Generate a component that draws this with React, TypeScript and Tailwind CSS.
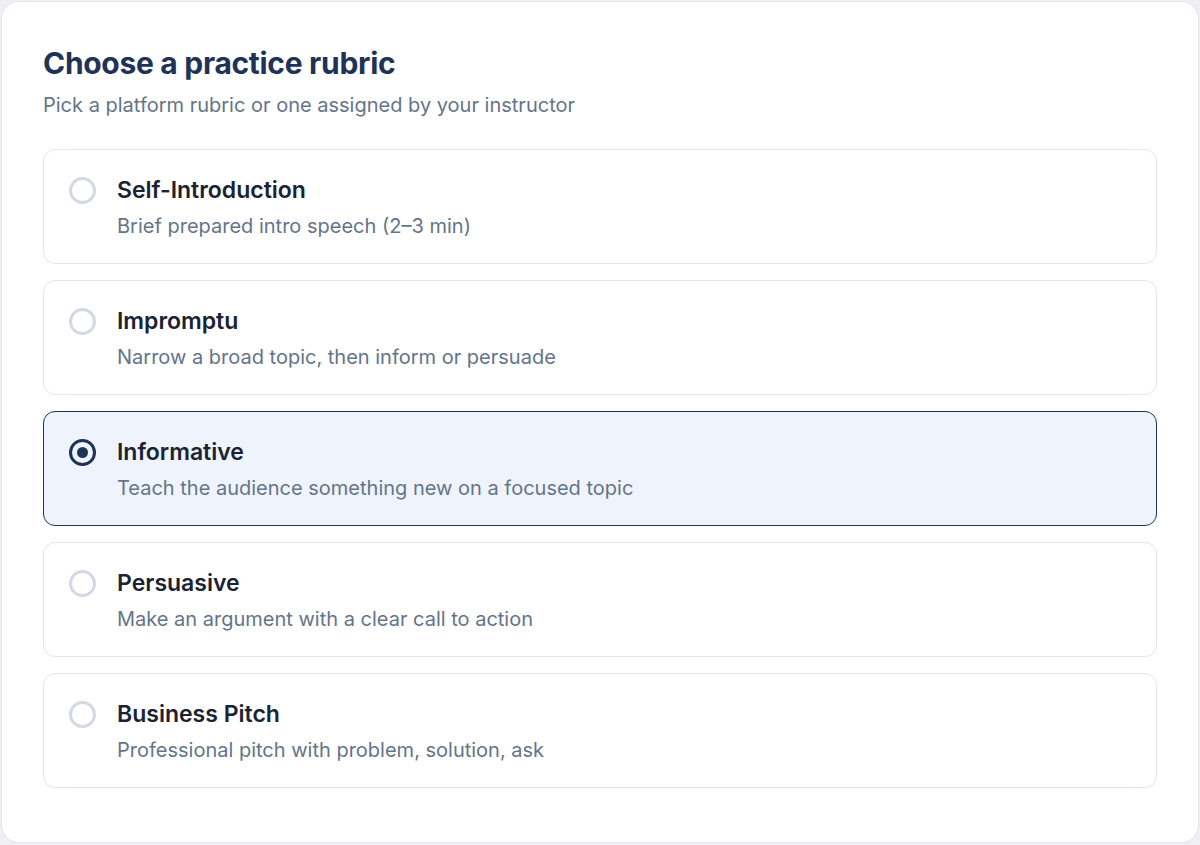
import React, { useState } from "react";

const rubrics = [
  { id: "self", title: "Self-Introduction", desc: "Brief prepared intro speech (2–3 min)" },
  { id: "impromptu", title: "Impromptu", desc: "Narrow a broad topic, then inform or persuade" },
  { id: "informative", title: "Informative", desc: "Teach the audience something new on a focused topic" },
  { id: "persuasive", title: "Persuasive", desc: "Make an argument with a clear call to action" },
  { id: "pitch", title: "Business Pitch", desc: "Professional pitch with problem, solution, ask" },
];

export default function App() {
  const [selected, setSelected] = useState("informative");

  return (
    <div className="min-h-[845px] bg-[#eef0f4] p-px font-['Inter',sans-serif]">
      <div className="h-[842px] rounded-[18px] border border-[#e3e6eb] bg-white px-[41px] pt-[42px]">
        <h1 className="text-[30px] font-bold leading-[38px] tracking-[-0.3px] text-[#1e3357]">
          Choose a practice rubric
        </h1>
        <p className="mt-[9px] text-[20px] leading-[28px] text-[#64748b]">
          Pick a platform rubric or one assigned by your instructor
        </p>

        <div className="mt-[30px] flex flex-col gap-[16px]">
          {rubrics.map((r) => {
            const active = r.id === selected;
            return (
              <button
                key={r.id}
                onClick={() => setSelected(r.id)}
                className={`flex h-[115px] w-full items-start gap-[21px] rounded-[12px] border px-[25px] pt-[25px] text-left ${
                  active ? "border-[#1e3357] bg-[#eff4fc] border-[1.5px]" : "border-[#e2e6ec] bg-white"
                }`}
              >
                <span
                  className={`mt-[2px] flex h-[27px] w-[27px] shrink-0 items-center justify-center rounded-full border-[3px] ${
                    active ? "border-[#1e3357]" : "border-[#d3d9e2]"
                  }`}
                >
                  {active && <span className="h-[11px] w-[11px] rounded-full bg-[#1e3357]" />}
                </span>
                <span className="flex flex-col">
                  <span className="text-[23px] font-semibold leading-[30px] text-[#1a2233]">{r.title}</span>
                  <span className="mt-[7px] text-[20px] leading-[28px] text-[#64748b]">{r.desc}</span>
                </span>
              </button>
            );
          })}
        </div>
      </div>
    </div>
  );
}
